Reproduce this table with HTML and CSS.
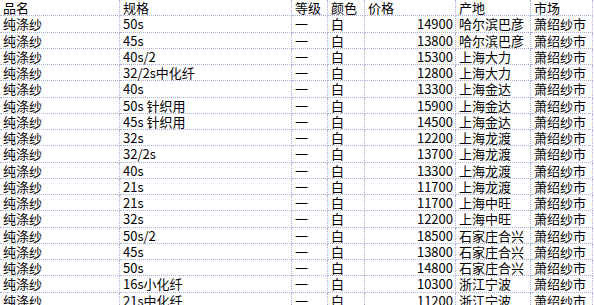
FILE: index.html
```html
<!DOCTYPE html>
<html lang="zh">
<head>
<meta charset="utf-8">
<link rel="stylesheet" href="styles.css">
</head>
<body>
<div class="sheet">
  <div class="c">品名</div><div class="c">规格</div><div class="c">等级</div><div class="c">颜色</div><div class="c">价格</div><div class="c">产地</div><div class="c">市场</div>
  <div class="c">纯涤纱</div><div class="c">50s</div><div class="c">一</div><div class="c">白</div><div class="c num">14900</div><div class="c">哈尔滨巴彦</div><div class="c">萧绍纱市</div>
  <div class="c">纯涤纱</div><div class="c">45s</div><div class="c">一</div><div class="c">白</div><div class="c num">13800</div><div class="c">哈尔滨巴彦</div><div class="c">萧绍纱市</div>
  <div class="c">纯涤纱</div><div class="c">40s/2</div><div class="c">一</div><div class="c">白</div><div class="c num">15300</div><div class="c">上海大力</div><div class="c">萧绍纱市</div>
  <div class="c">纯涤纱</div><div class="c">32/2s中化纤</div><div class="c">一</div><div class="c">白</div><div class="c num">12800</div><div class="c">上海大力</div><div class="c">萧绍纱市</div>
  <div class="c">纯涤纱</div><div class="c">40s</div><div class="c">一</div><div class="c">白</div><div class="c num">13300</div><div class="c">上海金达</div><div class="c">萧绍纱市</div>
  <div class="c">纯涤纱</div><div class="c">50s 针织用</div><div class="c">一</div><div class="c">白</div><div class="c num">15900</div><div class="c">上海金达</div><div class="c">萧绍纱市</div>
  <div class="c">纯涤纱</div><div class="c">45s 针织用</div><div class="c">一</div><div class="c">白</div><div class="c num">14500</div><div class="c">上海金达</div><div class="c">萧绍纱市</div>
  <div class="c">纯涤纱</div><div class="c">32s</div><div class="c">一</div><div class="c">白</div><div class="c num">12200</div><div class="c">上海龙渡</div><div class="c">萧绍纱市</div>
  <div class="c">纯涤纱</div><div class="c">32/2s</div><div class="c">一</div><div class="c">白</div><div class="c num">13700</div><div class="c">上海龙渡</div><div class="c">萧绍纱市</div>
  <div class="c">纯涤纱</div><div class="c">40s</div><div class="c">一</div><div class="c">白</div><div class="c num">13300</div><div class="c">上海龙渡</div><div class="c">萧绍纱市</div>
  <div class="c">纯涤纱</div><div class="c">21s</div><div class="c">一</div><div class="c">白</div><div class="c num">11700</div><div class="c">上海龙渡</div><div class="c">萧绍纱市</div>
  <div class="c">纯涤纱</div><div class="c">21s</div><div class="c">一</div><div class="c">白</div><div class="c num">11700</div><div class="c">上海中旺</div><div class="c">萧绍纱市</div>
  <div class="c">纯涤纱</div><div class="c">32s</div><div class="c">一</div><div class="c">白</div><div class="c num">12200</div><div class="c">上海中旺</div><div class="c">萧绍纱市</div>
  <div class="c">纯涤纱</div><div class="c">50s/2</div><div class="c">一</div><div class="c">白</div><div class="c num">18500</div><div class="c">石家庄合兴</div><div class="c">萧绍纱市</div>
  <div class="c">纯涤纱</div><div class="c">45s</div><div class="c">一</div><div class="c">白</div><div class="c num">13800</div><div class="c">石家庄合兴</div><div class="c">萧绍纱市</div>
  <div class="c">纯涤纱</div><div class="c">50s</div><div class="c">一</div><div class="c">白</div><div class="c num">14800</div><div class="c">石家庄合兴</div><div class="c">萧绍纱市</div>
  <div class="c">纯涤纱</div><div class="c">16s小化纤</div><div class="c">一</div><div class="c">白</div><div class="c num">10300</div><div class="c">浙江宁波</div><div class="c">萧绍纱市</div>
  <div class="c">纯涤纱</div><div class="c">21s中化纤</div><div class="c">一</div><div class="c">白</div><div class="c num">11200</div><div class="c">浙江宁波</div><div class="c">萧绍纱市</div>
</div>
</body>
</html>
```
FILE: styles.css
```css
html, body {
  margin: 0;
  padding: 0;
  background: #ffffff;
  overflow: hidden;
}
.sheet {
  display: grid;
  grid-template-columns: 120px 172px 36px 37px 91px 75px 62px;
  grid-auto-rows: 16.25px;
  font-family: "Noto Sans CJK SC", "Noto Sans", sans-serif;
  font-size: 13px;
  color: #000;
}
.c {
  box-sizing: border-box;
  border-right: 1px dotted #a9aed6;
  border-bottom: 1px dotted #a9aed6;
  padding: 0 2px 0 3px;
  line-height: 15px;
  white-space: nowrap;
}
.num {
  text-align: right;
}
```
